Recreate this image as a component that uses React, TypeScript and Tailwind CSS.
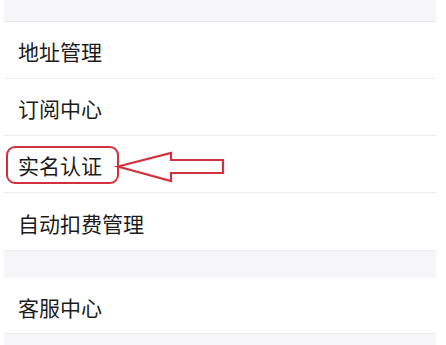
import React from "react";

const rows = ["地址管理", "订阅中心", "实名认证", "自动扣费管理"];

export default function App() {
  return (
    <div className="w-[446px] h-[345px] bg-white overflow-hidden" style={{ fontFamily: '"Noto Sans CJK SC", "Noto Sans", sans-serif' }}>
      <div className="ml-[4px] w-[432px]">
        <div className="h-[22px] bg-[#f6f6f8] border-b border-[#e9e9ec]" />
        {rows.map((t, i) => (
          <div
            key={t}
            className={`relative flex items-center pl-[14px] pt-[3px] h-[57px] text-[21px] text-[#1c1c1c] ${i < 3 ? "border-b border-[#ececee]" : ""}`}
          >
            <span className="leading-none">{t}</span>
            {i === 2 && (
              <>
                <div className="absolute left-[2px] top-[10px] w-[113px] h-[38px] border-2 border-[#d3303d] rounded-[9px]" />
                <svg className="absolute left-0 top-0" width="432" height="57" viewBox="0 0 432 57">
                  <polygon
                    points="114,30.5 167,17 167,24 219,24 219,37 167,37 167,45"
                    fill="none"
                    stroke="#d3303d"
                    strokeWidth="2.2"
                    strokeLinejoin="miter"
                  />
                </svg>
              </>
            )}
          </div>
        ))}
        <div className="h-[28px] bg-[#f6f6f8] border-t border-[#ececee]" />
        <div className="h-[55px] flex items-center pl-[14px] pt-[3px] text-[21px] text-[#1c1c1c]">
          <span className="leading-none">客服中心</span>
        </div>
        <div className="h-[12px] bg-[#f6f6f8] border-t border-[#ececee]" />
      </div>
    </div>
  );
}
